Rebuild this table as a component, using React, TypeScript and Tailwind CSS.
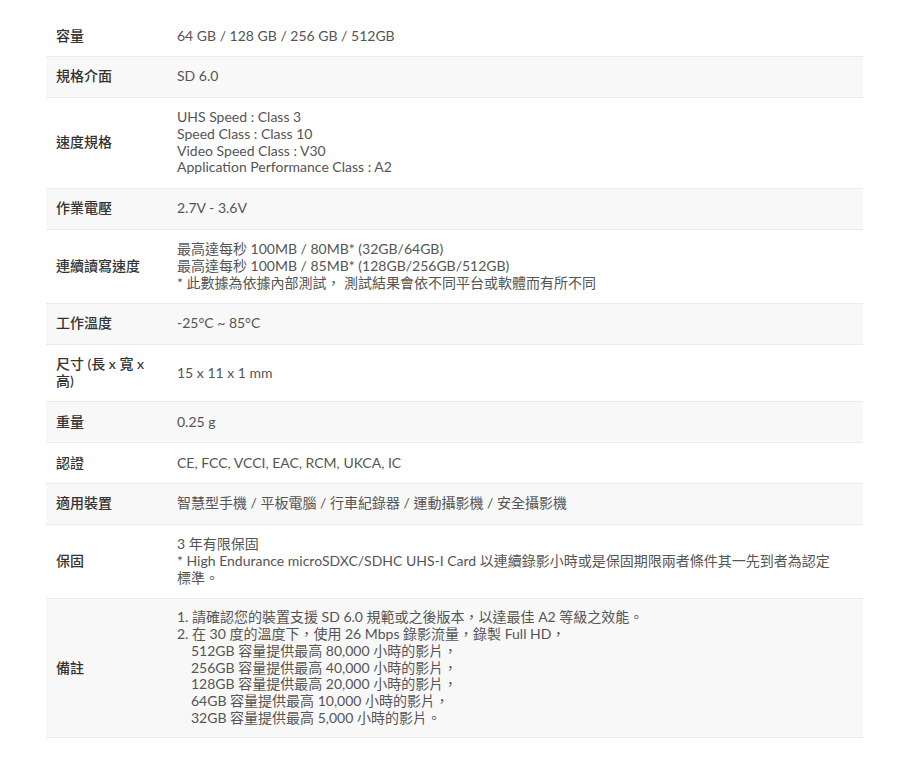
import React from "react";

type Row = { label: string; lines: string[]; indent?: number[]; tight?: boolean };

const rows: Row[] = [
  { label: "容量", lines: ["64 GB / 128 GB / 256 GB / 512GB"] },
  { label: "規格介面", lines: ["SD 6.0"] },
  {
    label: "速度規格",
    lines: [
      "UHS Speed : Class 3",
      "Speed Class : Class 10",
      "Video Speed Class : V30",
      "Application Performance Class : A2",
    ],
  },
  { label: "作業電壓", lines: ["2.7V - 3.6V"] },
  {
    label: "連續讀寫速度",
    lines: [
      "最高達每秒 100MB / 80MB* (32GB/64GB)",
      "最高達每秒 100MB / 85MB* (128GB/256GB/512GB)",
      "* 此數據為依據內部測試， 測試結果會依不同平台或軟體而有所不同",
    ],
  },
  { label: "工作溫度", lines: ["-25°C ~ 85°C"] },
  { label: "尺寸 (長 x 寬 x 高)", lines: ["15 x 11 x 1 mm"] },
  { label: "重量", lines: ["0.25 g"] },
  { label: "認證", lines: ["CE, FCC, VCCI, EAC, RCM, UKCA, IC"] },
  { label: "適用裝置", lines: ["智慧型手機 / 平板電腦 / 行車紀錄器 / 運動攝影機 / 安全攝影機"] },
  {
    label: "保固",
    lines: [
      "3 年有限保固",
      "* High Endurance microSDXC/SDHC UHS-I Card 以連續錄影小時或是保固期限兩者條件其一先到者為認定標準。",
    ],
  },
  {
    label: "備註",
    tight: true,
    indent: [2, 3, 4, 5, 6],
    lines: [
      "1. 請確認您的裝置支援 SD 6.0 規範或之後版本，以達最佳 A2 等級之效能。",
      "2. 在 30 度的溫度下，使用 26 Mbps 錄影流量，錄製 Full HD，",
      "512GB 容量提供最高 80,000 小時的影片，",
      "256GB 容量提供最高 40,000 小時的影片，",
      "128GB 容量提供最高 20,000 小時的影片，",
      "64GB 容量提供最高 10,000 小時的影片，",
      "32GB 容量提供最高 5,000 小時的影片。",
    ],
  },
];

export default function App() {
  return (
    <div
      lang="zh-TW"
      className="min-h-[766px] w-[900px] bg-white pt-[16px] pl-[46px] pr-[37px]"
      style={{ fontFamily: 'Lato, "Noto Sans CJK TC", sans-serif' }}
    >
      <div className="flex flex-col">
        {rows.map((row, i) => (
          <div
            key={i}
            className={
              "grid grid-cols-[131px_1fr] items-center border-b border-[#ebebeb] text-[14px] leading-[16.8px] " +
              (row.tight ? "py-[10px] " : "py-[11.5px] ") +
              (i % 2 === 1 ? "bg-[#f8f8f8]" : "bg-white")
            }
          >
            <div className="pl-[10px] pr-[22px] font-medium text-[#333]">{row.label}</div>
            <div className="flex flex-col pr-[20px] text-[#555]">
              {row.lines.map((line, j) => (
                <span key={j} className={row.indent?.includes(j) ? "block pl-[14px]" : "block"}>
                  {line}
                </span>
              ))}
            </div>
          </div>
        ))}
      </div>
    </div>
  );
}
